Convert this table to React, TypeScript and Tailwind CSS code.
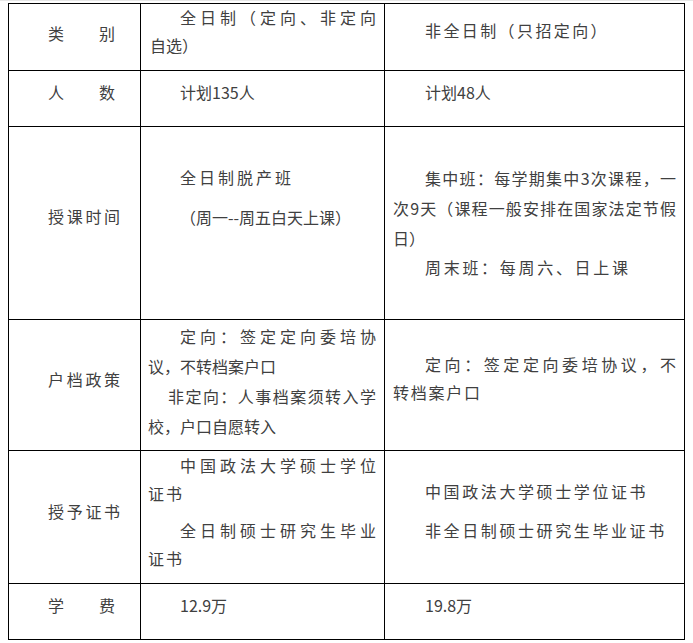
export default function App() {
  const cell = 'border-r border-b border-black';
  const c1 = `${cell} pl-[39px] leading-[30px]`;
  const c2 = `${cell} pl-[7px] pr-[8px]`;
  const c3 = `${cell} pl-[8px] pr-[8px]`;
  const just = 'text-justify [text-align-last:justify]';

  return (
    <div className="min-h-[643px] w-[693px] border-t border-[#e6e6e6] bg-white pl-[8px] pt-[2px] font-['Noto_Sans_CJK_SC',sans-serif] text-[16px] text-[#404040]">
      <div className="grid w-[677px] grid-cols-[132px_244px_300px] grid-rows-[67px_56px_193px_131px_133px_56px] border-l border-t border-black">
        {/* 类别 */}
        <div className={c1}>
          <p className="pt-[13.5px] tracking-[1px]">类　　别</p>
        </div>
        <div className={c2}>
          <div className="-mt-[1.5px] leading-[28px]">
            <p className={`indent-8 ${just}`}>全日制（定向、非定向</p>
            <p className="pl-[2px]">自选）</p>
          </div>
        </div>
        <div className={c3}>
          <p className="pt-[11px] leading-[30px] indent-8 tracking-[2.4px]">非全日制（只招定向）</p>
        </div>

        {/* 人数 */}
        <div className={c1}>
          <p className="pt-[5.5px] tracking-[1px]">人　　数</p>
        </div>
        <div className={c2}>
          <p className="pt-[5.5px] leading-[30px] indent-8">计划135人</p>
        </div>
        <div className={c3}>
          <p className="pt-[5.5px] leading-[30px] indent-8">计划48人</p>
        </div>

        {/* 授课时间 */}
        <div className={c1}>
          <p className="pt-[73.5px] tracking-[2.7px]">授课时间</p>
        </div>
        <div className={c2}>
          <div className="leading-[30px]">
            <p className="mt-[34.5px] indent-8 tracking-[3px]">全日制脱产班</p>
            <p className="mt-[10.5px] indent-8">（周一--周五白天上课）</p>
          </div>
        </div>
        <div className={c3}>
          <div className="pt-[36px] leading-[30px]">
            <p className={`indent-8 ${just}`}>集中班：每学期集中3次课程，一</p>
            <p className={just}>次9天（课程一般安排在国家法定节假</p>
            <p>日）</p>
            <p className="-mt-[1.5px] indent-8 tracking-[2.7px]">周末班：每周六、日上课</p>
          </div>
        </div>

        {/* 户档政策 */}
        <div className={c1}>
          <p className="pt-[43.5px] tracking-[2.7px]">户档政策</p>
        </div>
        <div className={c2}>
          <div className="pt-[1px] leading-[30px]">
            <p className={`indent-8 ${just}`}>定向：签定定向委培协</p>
            <p>议，不转档案户口</p>
            <p className={`indent-[20px] ${just}`}>非定向：人事档案须转入学</p>
            <p>校，户口自愿转入</p>
          </div>
        </div>
        <div className={c3}>
          <div className="pt-[30px] leading-[28px]">
            <p className={`indent-8 ${just}`}>定向：签定定向委培协议，不</p>
            <p className="tracking-[1.75px]">转档案户口</p>
          </div>
        </div>

        {/* 授予证书 */}
        <div className={c1}>
          <p className="pt-[44.7px] tracking-[2.7px]">授予证书</p>
        </div>
        <div className={c2}>
          <div className="leading-[28px]">
            <p className={`indent-8 ${just}`}>中国政法大学硕士学位</p>
            <p className="tracking-[2px]">证书</p>
            <p className={`mt-[9px] indent-8 ${just}`}>全日制硕士研究生毕业</p>
            <p className="tracking-[2px]">证书</p>
          </div>
        </div>
        <div className={c3}>
          <div className="pt-[26.3px] leading-[28px]">
            <p className="indent-8 tracking-[2.6px]">中国政法大学硕士学位证书</p>
            <p className="mt-[10.6px] indent-8 tracking-[2.6px]">非全日制硕士研究生毕业证书</p>
          </div>
        </div>

        {/* 学费 */}
        <div className={c1}>
          <p className="pt-[6px] tracking-[1px]">学　　费</p>
        </div>
        <div className={c2}>
          <p className="pt-[6px] leading-[30px] indent-8">12.9万</p>
        </div>
        <div className={c3}>
          <p className="pt-[6px] leading-[30px] indent-8">19.8万</p>
        </div>
      </div>
    </div>
  );
}
